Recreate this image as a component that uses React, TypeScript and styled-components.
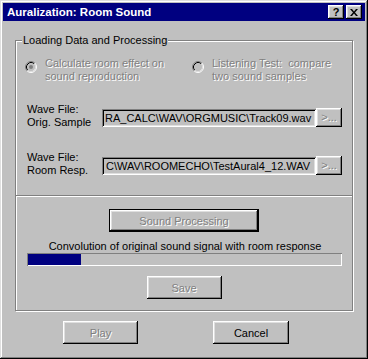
import React from 'react';
import styled, { createGlobalStyle, css } from 'styled-components';

const GlobalStyle = createGlobalStyle`
  html, body {
    margin: 0;
    padding: 0;
    background: #c0c0c0;
  }
  body {
    font-family: 'Liberation Sans', Arial, sans-serif;
    font-size: 11px;
  }
`;

const disabledText = css`
  color: #808080;
  text-shadow: 1px 1px 0 #fff;
`;

const raised = css`
  box-shadow:
    inset -1px -1px 0 #000,
    inset 1px 1px 0 #fff,
    inset -2px -2px 0 #808080,
    inset 2px 2px 0 #dfdfdf;
`;

const Window = styled.div`
  width: 368px;
  height: 359px;
  box-sizing: border-box;
  padding: 3px;
  background: #c0c0c0;
  display: flex;
  flex-direction: column;
  box-shadow:
    inset -1px -1px 0 #000,
    inset 1px 1px 0 #dfdfdf,
    inset -2px -2px 0 #808080,
    inset 2px 2px 0 #fff;
`;

const TitleBar = styled.div`
  height: 18px;
  background: #000080;
  display: flex;
  align-items: center;
  padding: 0 3px 0 4px;
  color: #fff;
  font-weight: bold;
  font-size: 11.5px;
`;

const TitleText = styled.div`
  flex: 1;
`;

const TitleButton = styled.div`
  width: 16px;
  height: 14px;
  box-sizing: border-box;
  background: #c0c0c0;
  ${raised};
  display: flex;
  align-items: center;
  justify-content: center;
  color: #000;
  font-size: 11px;
  font-weight: bold;
  & + & {
    margin-left: 2px;
  }
`;

const Content = styled.div`
  padding: 19px 12px 0;
  display: flex;
  flex-direction: column;
`;

const GroupBox = styled.div`
  position: relative;
  height: 271px;
  box-sizing: border-box;
  border: 1px solid #808080;
  box-shadow: 1px 1px 0 #fff, inset 1px 1px 0 #fff;
  display: flex;
  flex-direction: column;
`;

const Legend = styled.div`
  position: absolute;
  top: -7px;
  left: 6px;
  padding: 0 1px;
  background: #c0c0c0;
  color: #000;
  line-height: 13px;
`;

const Section = styled.div<{ $top: number }>`
  display: flex;
  flex-direction: column;
  padding-top: ${(p) => p.$top}px;
`;

const UpperSection = styled(Section)`
  height: 154px;
  box-sizing: border-box;
`;

const Divider = styled.div`
  height: 1px;
  background: #808080;
  border-bottom: 1px solid #fff;
`;

const RadioRow = styled.div`
  display: flex;
  padding-left: 9px;
  margin-bottom: 20px;
`;

const RadioItem = styled.div<{ $width?: number }>`
  display: flex;
  align-items: flex-start;
  gap: 8px;
  width: ${(p) => (p.$width ? `${p.$width}px` : 'auto')};
  line-height: 13px;
  ${disabledText};
  svg {
    margin-top: 4px;
    flex: none;
  }
`;

const FileRow = styled.div`
  display: flex;
  align-items: flex-start;
  padding-left: 11px;
  & + & {
    margin-top: 22px;
  }
`;

const FileLabel = styled.div`
  width: 75px;
  line-height: 13px;
  color: #000;
`;

const TextBox = styled.div<{ $pad: number }>`
  margin-top: 6px;
  width: 214px;
  height: 18px;
  box-sizing: border-box;
  padding: 2px 2px 0 ${(p) => p.$pad}px;
  overflow: hidden;
  white-space: nowrap;
  line-height: 14px;
  color: #000;
  background: #c0c0c0;
  box-shadow:
    inset 1px 1px 0 #808080,
    inset -1px -1px 0 #fff,
    inset 2px 2px 0 #000,
    inset -2px -2px 0 #dfdfdf;
`;

const Button = styled.div<{ $w: number; $h?: number; $disabled?: boolean; $default?: boolean }>`
  width: ${(p) => p.$w}px;
  height: ${(p) => p.$h ?? 23}px;
  box-sizing: border-box;
  display: flex;
  align-items: center;
  justify-content: center;
  background: #c0c0c0;
  color: #000;
  ${(p) => (p.$disabled ? disabledText : '')};
  ${(p) =>
    p.$default
      ? css`
          box-shadow:
            inset 0 0 0 1px #000,
            inset -2px -2px 0 #000,
            inset 2px 2px 0 #fff,
            inset -3px -3px 0 #808080,
            inset 3px 3px 0 #dfdfdf;
        `
      : raised};
`;

const BrowseButton = styled(Button)`
  margin-top: 5px;
  padding-bottom: 2px;
`;

const CenterRow = styled.div<{ $top: number }>`
  display: flex;
  justify-content: center;
  margin-top: ${(p) => p.$top}px;
`;

const ProgressLabel = styled.div`
  margin-top: 8px;
  text-align: center;
  line-height: 13px;
  color: #000;
  padding-left: 2px;
`;

const Progress = styled.div`
  margin-left: 11px;
  width: 315px;
  height: 13px;
  box-sizing: border-box;
  padding: 1px;
  background: #c0c0c0;
  box-shadow: inset 1px 1px 0 #808080, inset -1px -1px 0 #fff;
`;

const ProgressFill = styled.div`
  height: 100%;
  background: #000080;
`;

const BottomRow = styled.div`
  display: flex;
  padding-left: 48px;
  gap: 75px;
  margin-top: 10px;
`;

function Radio({ checked }: { checked?: boolean }) {
  return (
    <svg width="12" height="12" viewBox="0 0 12 12">
      <circle cx="6" cy="6" r="4" fill="#c0c0c0" />
      <path d="M2.11 9.89 A5.5 5.5 0 0 1 9.89 2.11" stroke="#808080" fill="none" />
      <path d="M9.89 2.11 A5.5 5.5 0 0 1 2.11 9.89" stroke="#fff" fill="none" />
      <path d="M2.82 9.18 A4.5 4.5 0 0 1 9.18 2.82" stroke="#000" fill="none" />
      <path d="M9.18 2.82 A4.5 4.5 0 0 1 2.82 9.18" stroke="#dfdfdf" fill="none" />
      {checked && <circle cx="6" cy="6" r="2" fill="#808080" />}
    </svg>
  );
}

export default function App() {
  const progress = 53;
  return (
    <>
      <GlobalStyle />
      <Window>
        <TitleBar>
          <TitleText>Auralization: Room Sound</TitleText>
          <TitleButton>?</TitleButton>
          <TitleButton>
            <svg width="8" height="7" viewBox="0 0 8 7">
              <path d="M0 0h2l2 2.5L6 0h2L5 3.5 8 7H6L4 4.5 2 7H0l3-3.5z" fill="#000" />
            </svg>
          </TitleButton>
        </TitleBar>
        <Content>
          <GroupBox>
            <Legend>Loading Data and Processing</Legend>
            <UpperSection $top={16}>
              <RadioRow>
                <RadioItem $width={167}>
                  <Radio checked />
                  <div>
                    Calculate room effect on
                    <br />
                    sound reproduction
                  </div>
                </RadioItem>
                <RadioItem>
                  <Radio />
                  <div>
                    Listening Test:&nbsp; compare
                    <br />
                    two sound samples
                  </div>
                </RadioItem>
              </RadioRow>
              <FileRow>
                <FileLabel>
                  Wave File:
                  <br />
                  Orig. Sample
                </FileLabel>
                <TextBox $pad={3}>RA_CALC\WAV\ORGMUSIC\Track09.wav</TextBox>
                <BrowseButton $w={26} $h={19} $disabled>
                  &gt;...
                </BrowseButton>
              </FileRow>
              <FileRow>
                <FileLabel>
                  Wave File:
                  <br />
                  Room Resp.
                </FileLabel>
                <TextBox $pad={4}>C\WAV\ROOMECHO\TestAural4_12.WAV</TextBox>
                <BrowseButton $w={26} $h={19} $disabled>
                  &gt;...
                </BrowseButton>
              </FileRow>
            </UpperSection>
            <Divider />
            <Section $top={0}>
              <CenterRow $top={12}>
                <Button $w={150} $disabled $default>
                  Sound Processing
                </Button>
              </CenterRow>
              <ProgressLabel>Convolution of original sound signal with room response</ProgressLabel>
              <Progress>
                <ProgressFill style={{ width: `${progress}px` }} />
              </Progress>
              <CenterRow $top={10}>
                <Button $w={75} $disabled>
                  Save
                </Button>
              </CenterRow>
            </Section>
          </GroupBox>
          <BottomRow>
            <Button $w={75} $disabled>
              Play
            </Button>
            <Button $w={76}>Cancel</Button>
          </BottomRow>
        </Content>
      </Window>
    </>
  );
}
